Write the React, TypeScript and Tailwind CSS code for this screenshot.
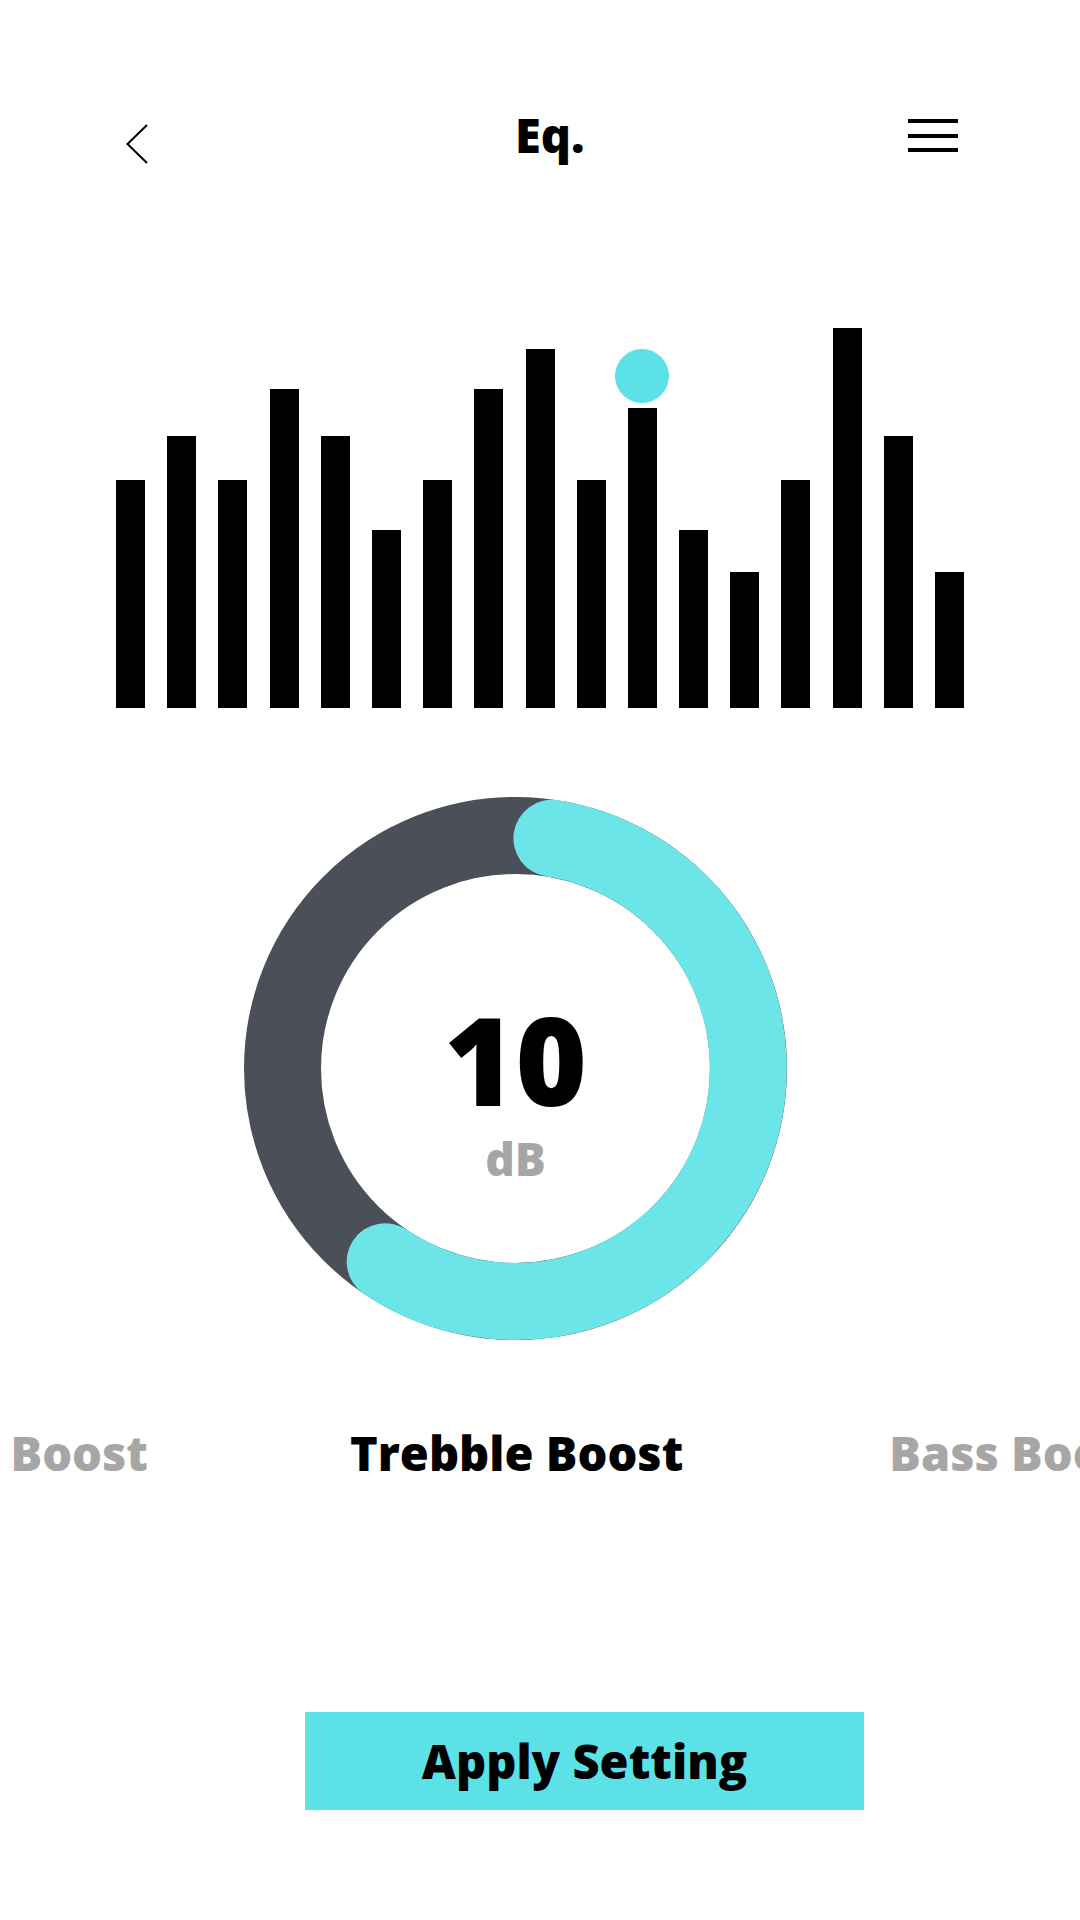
import React from "react";

const bars = [228, 272, 228, 319, 272, 178, 228, 319, 359, 228, 300, 178, 136, 228, 380, 272, 136];

export default function App() {
  return (
    <div className="relative w-[1080px] h-[1920px] bg-white overflow-hidden text-black" style={{ fontFamily: '"Open Sans", "Liberation Sans", sans-serif' }}>
      {/* Header */}
      <div className="flex items-start h-[52px] mt-[112px]">
        <svg className="ml-[126px] mt-[12px] w-[22px] h-[40px]" viewBox="0 0 22 40" fill="none">
          <path d="M21 1 L1.5 20 L21 39" stroke="#000" strokeWidth="2" />
        </svg>
        <div className="ml-[367px] text-[47px] leading-none font-extrabold">Eq.</div>
        <div className="ml-auto mr-[122px] mt-[7px] flex flex-col gap-[10.5px] w-[50px]">
          <div className="h-[4px] bg-black" />
          <div className="h-[4px] bg-black" />
          <div className="h-[4px] bg-black" />
        </div>
      </div>

      {/* Bars */}
      <div className="flex items-end gap-[22.2px] ml-[116px] mt-[163px] h-[381px]">
        {bars.map((h, i) => (
          <div key={i} className="relative w-[29px] bg-black" style={{ height: h }}>
            {i === 10 && (
              <div className="absolute left-1/2 -translate-x-1/2 -top-[59px] w-[54px] h-[54px] rounded-full bg-[#5ce1e6]" />
            )}
          </div>
        ))}
      </div>

      {/* Ring */}
      <div className="relative ml-[244px] mt-[89px] w-[543px] h-[543px]">
        <svg className="absolute inset-0" width="543" height="543" viewBox="-1.5 -1.5 543 543">
          <circle cx="270" cy="270" r="233" fill="none" stroke="#4b5058" strokeWidth="77" />
          <path d="M306.4 39.8 A233 233 0 1 1 139.7 463.2" fill="none" stroke="#6ce5e8" strokeWidth="77" strokeLinecap="round" />
        </svg>
        <div className="relative flex flex-col items-center pt-[201px]">
          <div className="text-[122px] leading-none font-extrabold">10</div>
          <div className="mt-[15px] text-[46px] leading-none font-extrabold text-[#a6a6a6]">dB</div>
        </div>
      </div>

      {/* Labels carousel */}
      <div className="mt-[90px] w-[1080px] overflow-hidden grid grid-cols-[148px_auto_1fr] gap-x-[202px] text-[47px] leading-none font-extrabold whitespace-nowrap">
        <div className="flex justify-end text-[#a6a6a6]">Vocal Boost</div>
        <div>Trebble Boost</div>
        <div className="ml-[4px] text-[#a6a6a6]">Bass Boost</div>
      </div>

      {/* Button */}
      <div className="mt-[235px] ml-[305px] w-[559px] h-[98px] bg-[#5ce1e6] flex items-center justify-center">
        <span className="text-[47px] leading-none font-extrabold">Apply Setting</span>
      </div>
    </div>
  );
}
